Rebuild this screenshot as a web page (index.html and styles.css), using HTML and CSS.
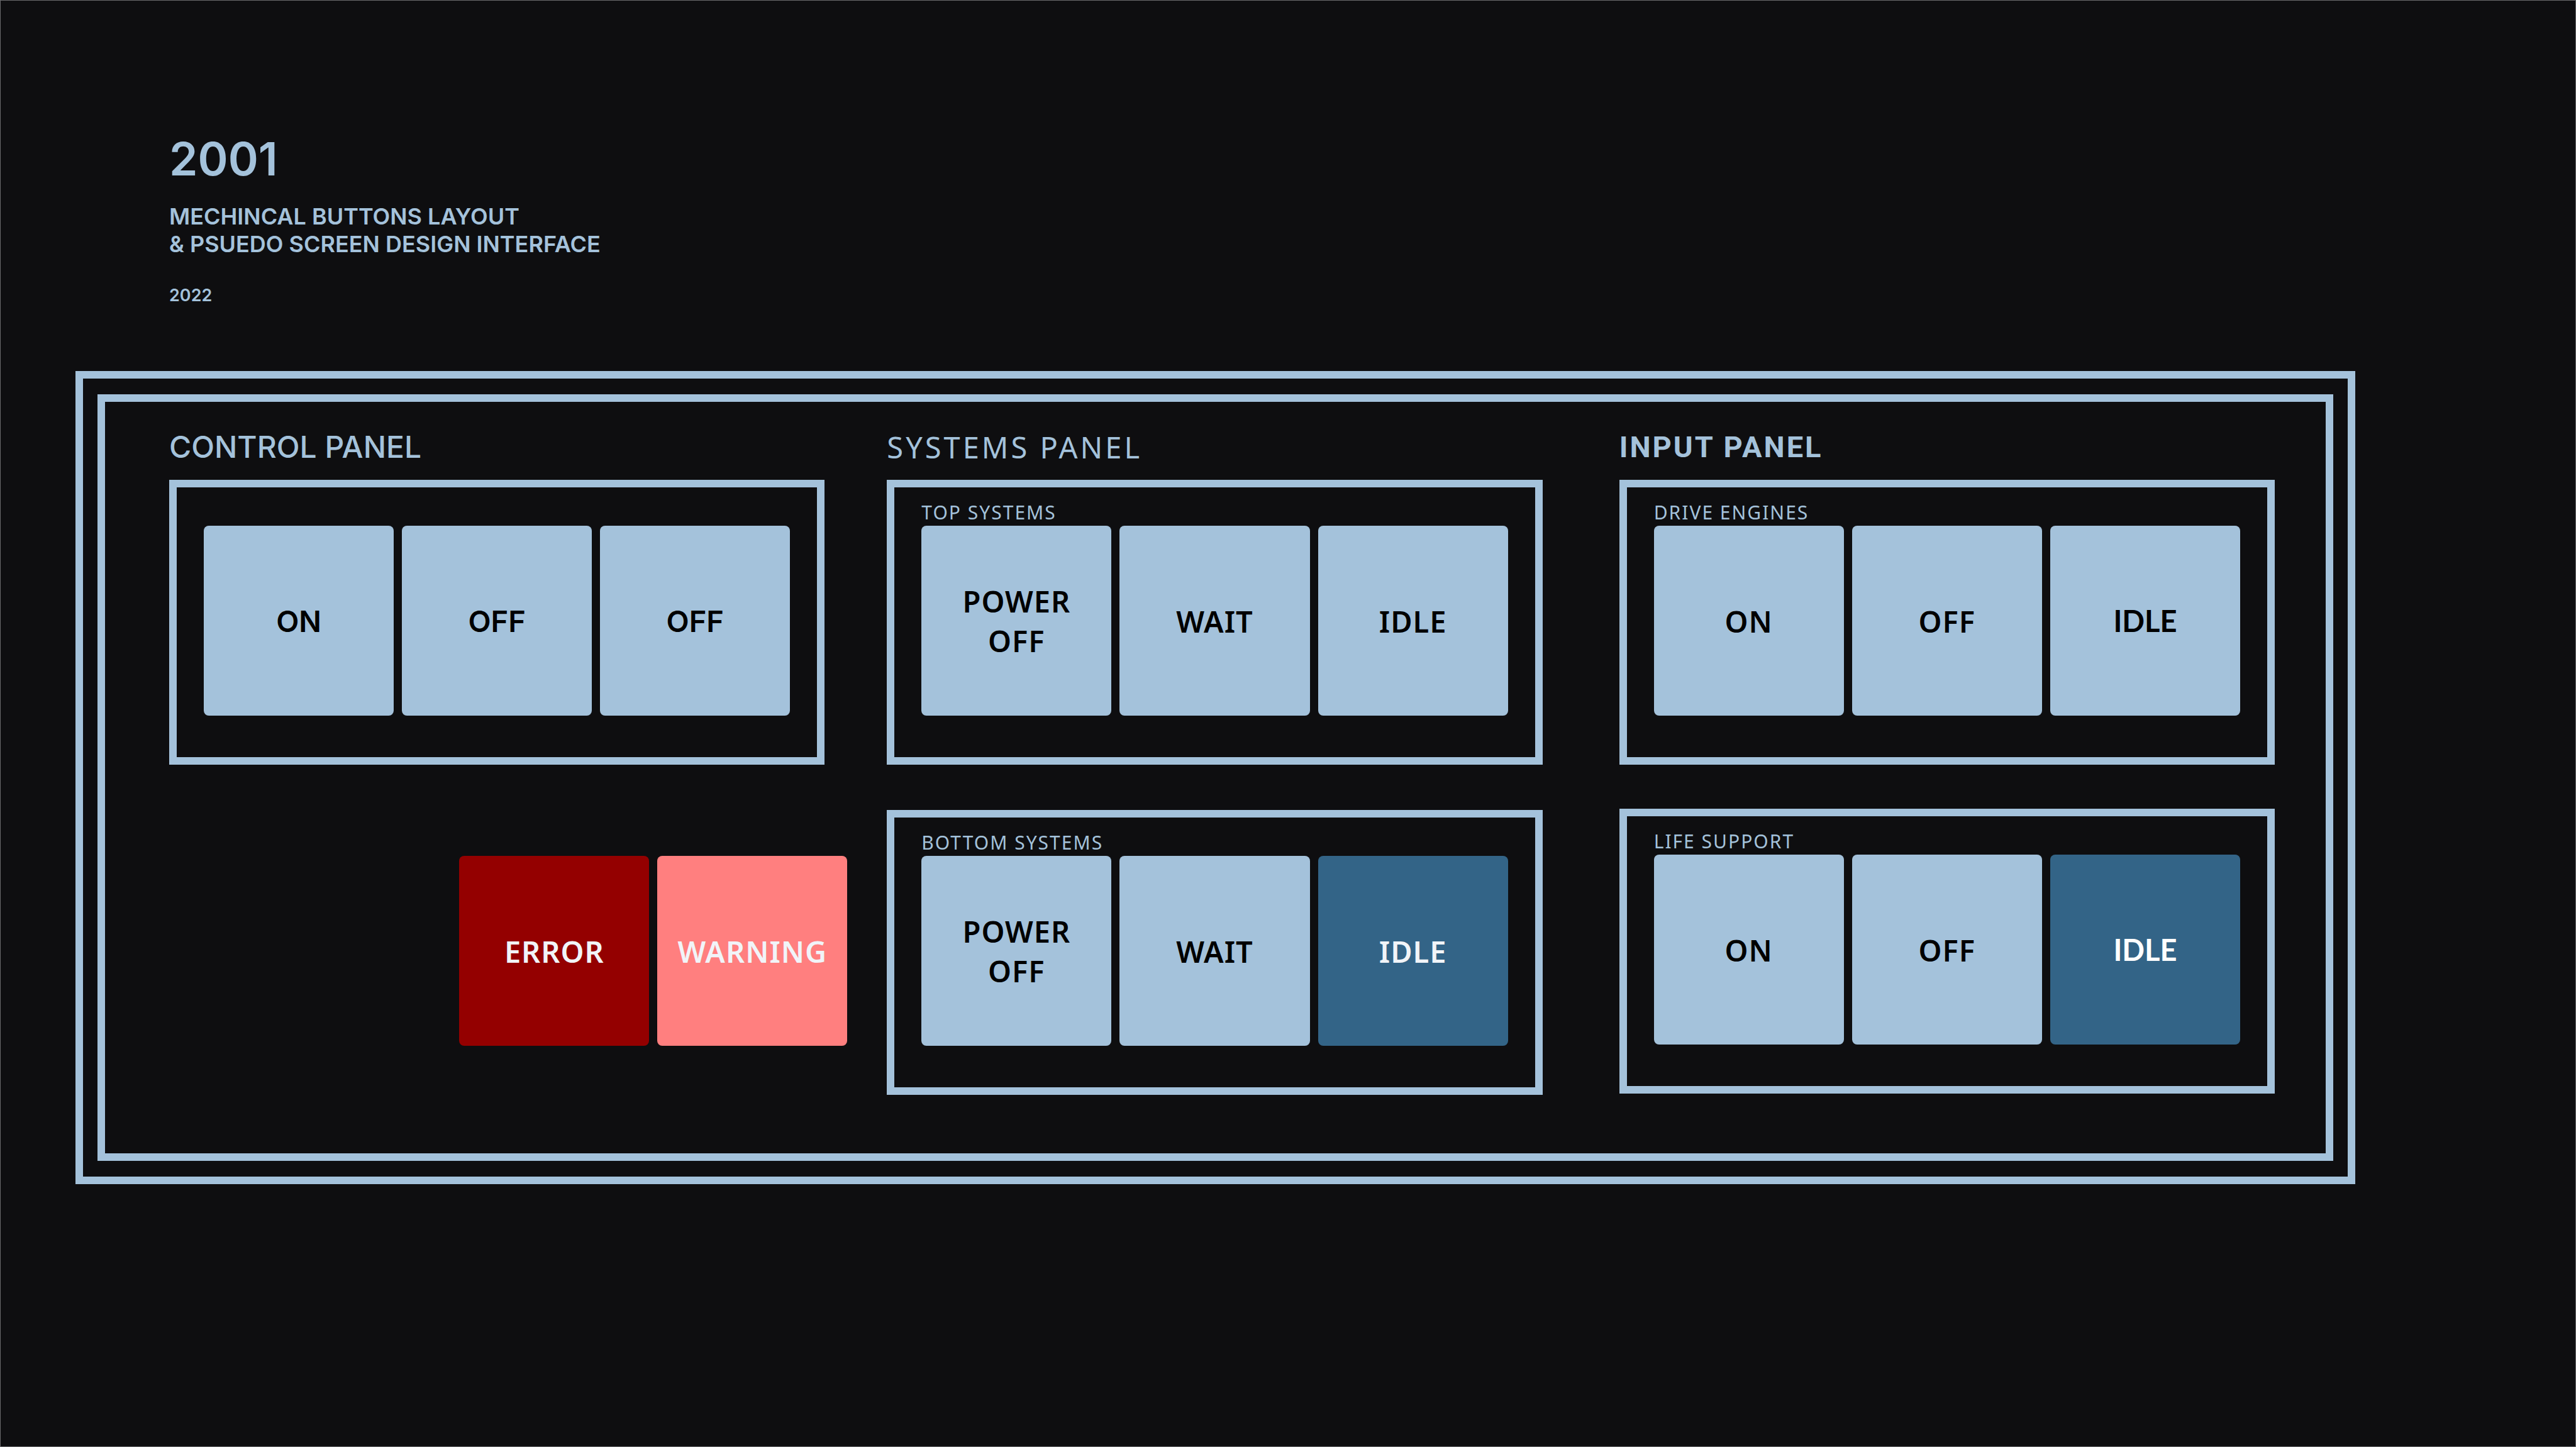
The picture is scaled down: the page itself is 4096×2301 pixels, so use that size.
FILE: index.html
```html
<!DOCTYPE html>
<html lang="en">
<head>
<meta charset="utf-8">
<meta name="viewport" content="width=device-width, initial-scale=1">
<title>2001 Mechanical Buttons</title>
<link rel="stylesheet" href="styles.css">
</head>
<body>
<div class="page">
  <header class="intro">
    <h1 class="intro-title">2001</h1>
    <p class="intro-text">MECHINCAL BUTTONS LAYOUT<br>&amp; PSUEDO SCREEN DESIGN INTERFACE</p>
    <p class="intro-year">2022</p>
  </header>
  <main class="frame">
    <div class="board">
      <section class="column column-control">
        <h2 class="heading heading-control">CONTROL PANEL</h2>
        <div class="panel">
          <div class="keys keys-plain">
            <button class="key" type="button">ON</button>
            <button class="key" type="button">OFF</button>
            <button class="key" type="button">OFF</button>
          </div>
        </div>
        <div class="alerts">
          <button class="key key-error" type="button">ERROR</button>
          <button class="key key-warning" type="button">WARNING</button>
        </div>
      </section>
      <section class="column column-systems">
        <h2 class="heading heading-systems">SYSTEMS PANEL</h2>
        <div class="panel">
          <h3 class="label">TOP SYSTEMS</h3>
          <div class="keys">
            <button class="key" type="button">POWER<br>OFF</button>
            <button class="key" type="button">WAIT</button>
            <button class="key" type="button">IDLE</button>
          </div>
        </div>
        <div class="panel">
          <h3 class="label">BOTTOM SYSTEMS</h3>
          <div class="keys">
            <button class="key" type="button">POWER<br>OFF</button>
            <button class="key" type="button">WAIT</button>
            <button class="key key-active" type="button">IDLE</button>
          </div>
        </div>
      </section>
      <section class="column column-input">
        <h2 class="heading heading-input">INPUT PANEL</h2>
        <div class="panel">
          <h3 class="label">DRIVE ENGINES</h3>
          <div class="keys">
            <button class="key" type="button">ON</button>
            <button class="key" type="button">OFF</button>
            <button class="key key-compact" type="button">IDLE</button>
          </div>
        </div>
        <div class="panel">
          <h3 class="label">LIFE SUPPORT</h3>
          <div class="keys">
            <button class="key" type="button">ON</button>
            <button class="key" type="button">OFF</button>
            <button class="key key-compact key-active" type="button">IDLE</button>
          </div>
        </div>
      </section>
    </div>
  </main>
</div>
</body>
</html>
```
FILE: styles.css
```css
:root {
  --ink: #0e0e10;
  --sky: #a4c2db;
  --steel: #336487;
  --frost: #f1f4f8;
  --rule: 12px;
}

* {
  box-sizing: border-box;
}

body {
  margin: 0;
  background: var(--ink);
  color: var(--sky);
  font-family: "Noto Sans", sans-serif;
}

h1, h2, h3, p {
  margin: 0;
}

.page {
  min-height: 100vh;
  padding: 207px 350px 0 119px;
  border: 1px solid #6a6a6c;
}

.intro {
  padding: 0 0 104px 149px;
  font-family: Inter, sans-serif;
  font-weight: 600;
}

.intro-title {
  font-size: 73px;
  line-height: 90px;
  font-weight: 600;
}

.intro-text {
  margin-top: 24px;
  font-size: 36px;
  line-height: 44px;
}

.intro-year {
  margin-top: 44px;
  font-size: 27px;
  line-height: 32px;
}

.frame {
  border: var(--rule) solid var(--sky);
  padding: 25px 23px;
}

.board {
  display: grid;
  grid-template-columns: 1fr 99px 1fr 122px 1fr;
  border: var(--rule) solid var(--sky);
  padding: 40px 81px 93px 102px;
}

.column-control {
  grid-column: 1;
}

.column-systems {
  grid-column: 3;
}

.column-input {
  grid-column: 5;
}

.heading {
  padding-bottom: 20px;
  font-size: 47px;
  line-height: 64px;
}

.heading-control {
  font-family: Inter, sans-serif;
  font-size: 48px;
  font-weight: 500;
}

.heading-systems {
  font-weight: 400;
  letter-spacing: 4px;
}

.heading-input {
  font-family: Roboto, sans-serif;
  font-weight: 700;
  letter-spacing: 3px;
}

.panel {
  border: var(--rule) solid var(--sky);
  padding: 20px 43px 66px;
}

.column-systems .panel + .panel {
  margin-top: 72px;
}

.column-input .panel + .panel {
  margin-top: 70px;
}

.label {
  height: 41px;
  font-size: 30px;
  line-height: 40px;
  font-weight: 400;
  letter-spacing: 2px;
}

.keys {
  display: grid;
  grid-template-columns: repeat(3, 1fr);
  gap: 13px;
}

.keys-plain {
  padding-top: 41px;
}

.key {
  height: 302px;
  padding: 2px 0 0;
  border: 0;
  border-radius: 8px;
  background: var(--sky);
  color: #000;
  font-family: "Noto Sans", sans-serif;
  font-size: 47px;
  line-height: 63px;
  font-weight: 600;
  letter-spacing: 1px;
}

.keys-plain .key {
  padding: 0;
  font-family: Inter, sans-serif;
  letter-spacing: 0;
}

.key-active {
  background: var(--steel);
  color: var(--frost);
}

.key-compact {
  padding: 0;
  font-family: Lato, sans-serif;
  font-weight: 700;
  letter-spacing: 0;
}

.key-compact.key-active {
  color: #fff;
}

.alerts {
  display: grid;
  grid-template-columns: 302px 302px;
  gap: 13px;
  justify-content: end;
  margin: 145px -36px 0 0;
}

.key-error {
  background: #940000;
  color: var(--frost);
}

.key-warning {
  background: #ff7f7f;
  color: var(--frost);
}
```
